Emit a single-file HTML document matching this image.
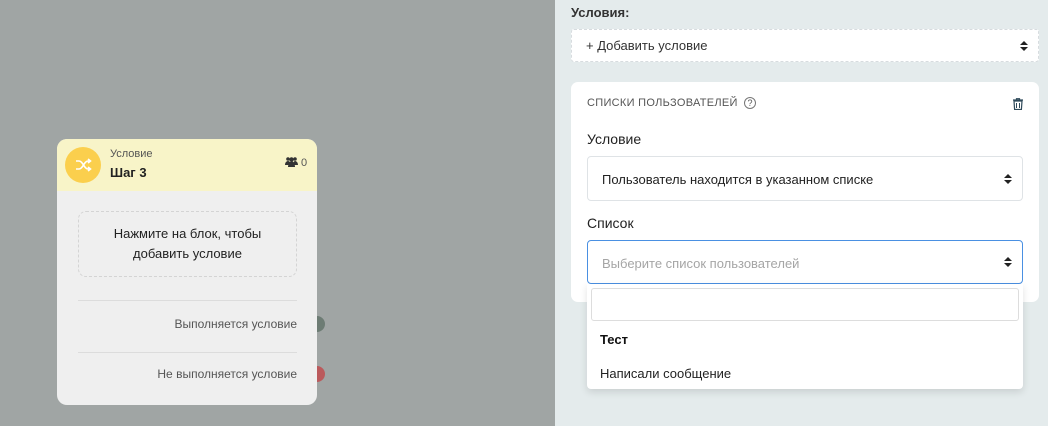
<!DOCTYPE html>
<html><head><meta charset="utf-8"><style>
*{box-sizing:border-box;margin:0;padding:0}
body{width:1048px;height:426px;overflow:hidden;position:relative;background:#a0a5a4;font-family:"Liberation Sans","DejaVu Sans",sans-serif;color:#222}
.abs{position:absolute}
.card{left:57px;top:139px;width:260px;height:266px;background:#efefef;border-radius:10px;overflow:hidden}
.hdr{left:0;top:0;width:260px;height:52px;background:#f8f4c8}
.circ{left:8px;top:8px;width:36px;height:36px;border-radius:50%;background:#fbcf4d}
.panel{left:555px;top:0;width:493px;height:426px;background:#e4ebec}
.sel{background:#fff;border:1px solid #dfe3e6;border-radius:4px}
.arr{position:absolute;right:10px;top:50%;margin-top:-6px;width:8px;height:12px}
</style></head><body>
<div class="abs" style="left:309px;top:316px;width:16px;height:16px;border-radius:50%;background:#6d7c74"></div>
<div class="abs" style="left:309px;top:366px;width:16px;height:16px;border-radius:50%;background:#bb5a5c"></div>
<div class="abs card">
 <div class="abs hdr">
  <div class="abs circ"><svg width="36" height="36" viewBox="0 0 36 36"><g fill="none" stroke="#fff" stroke-width="1.6"><path d="M11 14h3c4 0 5 8 9 8h2M11 22h3c4 0 5-8 9-8h2"/><path d="M23 12l2.5 2-2.5 2M23 20l2.5 2-2.5 2"/></g></svg></div>
  <div class="abs" style="left:53px;top:9px;font-size:11px;color:#555">Условие</div>
  <div class="abs" style="left:53px;top:26px;font-size:13px;font-weight:bold;color:#222">Шаг 3</div>
  <div class="abs" style="left:228px;top:17px;font-size:11px;color:#555"><svg width="13" height="11" viewBox="0 0 13 11" style="vertical-align:-1px"><circle cx="3" cy="3" r="1.8" fill="#333"/><circle cx="10" cy="3" r="1.8" fill="#333"/><circle cx="6.5" cy="3.5" r="2.2" fill="#333"/><path d="M0 9c0-3 2-4 3-4s2 1 2 1 1-1 1.5-1 1.5 0 1.5 1 1-1 2-1 3 1 3 4z" fill="#333"/><path d="M3 11c0-3 2-5 3.5-5S10 8 10 11z" fill="#333"/></svg> 0</div>
 </div>
 <div class="abs" style="left:21px;top:72px;width:219px;height:66px;border:1px dashed #d4d4d4;border-radius:8px;text-align:center;font-size:13px;line-height:20px;padding-top:12px;color:#222">Нажмите на блок, чтобы<br>добавить условие</div>
 <div class="abs" style="left:21px;top:161px;width:219px;border-top:1px solid #dcdcdc"></div>
 <div class="abs" style="left:21px;top:213px;width:219px;border-top:1px solid #dcdcdc"></div>
 <div class="abs" style="right:20px;top:178px;font-size:12px;color:#555">Выполняется условие</div>
 <div class="abs" style="right:20px;top:228px;font-size:12px;color:#555">Не выполняется условие</div>
</div>
<div class="abs panel"></div>
<div class="abs" style="left:571px;top:5px;font-size:13px;font-weight:bold;color:#333">Условия:</div>
<div class="abs" style="left:571px;top:29px;width:468px;height:33px;background:#fff;border:1px dashed #d7dcdf;border-radius:3px;font-size:13px;padding:8px 0 0 14px;color:#333">+ Добавить условие
 <svg class="arr" viewBox="0 0 8 12"><path d="M0 5L4 1 8 5zM0 7l4 4 4-4z" fill="#222"/></svg></div>
<div class="abs" style="left:571px;top:82px;width:468px;height:220px;background:#fff;border-radius:7px"></div>
<div class="abs" style="left:587px;top:97px;font-size:11px;color:#555;letter-spacing:.3px">СПИСКИ ПОЛЬЗОВАТЕЛЕЙ <span style="display:inline-block;width:12px;height:12px;border:1px solid #777;border-radius:50%;font-size:9px;text-align:center;line-height:10px;margin-left:3px">?</span></div>
<svg class="abs" style="left:1013px;top:98px" width="10" height="12" viewBox="0 0 10 12"><path d="M0 2h10M3.5 2V.7h3V2M1 3h8l-.6 8.5H1.6z" fill="none" stroke="#2f4a5a" stroke-width="1.2"/><path d="M3.5 5v5M6.5 5v5" stroke="#2f4a5a"/></svg>
<div class="abs" style="left:587px;top:131px;font-size:14px;color:#222">Условие</div>
<div class="abs sel" style="left:587px;top:156px;width:436px;height:45px;font-size:13px;padding:15px 0 0 14px;color:#222">Пользователь находится в указанном списке<svg class="arr" viewBox="0 0 8 12"><path d="M0 5L4 1 8 5zM0 7l4 4 4-4z" fill="#222"/></svg></div>
<div class="abs" style="left:587px;top:215px;font-size:14px;color:#222">Список</div>
<div class="abs sel" style="left:587px;top:240px;width:436px;height:44px;border-color:#4a90e2;font-size:13px;padding:15px 0 0 14px;color:#a5a5a5">Выберите список пользователей<svg class="arr" viewBox="0 0 8 12"><path d="M0 5L4 1 8 5zM0 7l4 4 4-4z" fill="#222"/></svg></div>
<div class="abs" style="left:587px;top:284px;width:436px;height:105px;background:#fff;border-radius:0 0 4px 4px;box-shadow:0 3px 8px rgba(0,0,0,.12)">
 <div class="abs" style="left:4px;top:4px;width:428px;height:33px;border:1px solid #ddd;border-radius:3px"></div>
 <div class="abs" style="left:13px;top:48px;font-size:13px;font-weight:bold;color:#111">Тест</div>
 <div class="abs" style="left:13px;top:82px;font-size:13px;color:#222">Написали сообщение</div>
</div>
</body></html>
